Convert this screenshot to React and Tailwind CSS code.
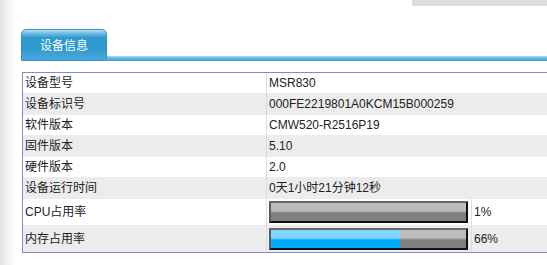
import React from 'react';

const rows = [
  { label: '设备型号', value: 'MSR830', h: 'h-[20px]', bg: 'bg-white' },
  { label: '设备标识号', value: '000FE2219801A0KCM15B000259', h: 'h-[22px]', bg: 'bg-[#ececec]' },
  { label: '软件版本', value: 'CMW520-R2516P19', h: 'h-[20px]', bg: 'bg-white' },
  { label: '固件版本', value: '5.10', h: 'h-[22px]', bg: 'bg-[#ececec]' },
  { label: '硬件版本', value: '2.0', h: 'h-[20px]', bg: 'bg-white' },
  { label: '设备运行时间', value: '0天1小时21分钟12秒', h: 'h-[22px]', bg: 'bg-[#ececec]' },
];

const usage = [
  { label: 'CPU占用率', pct: 1, fill: false, h: 'h-[26px]', bg: 'bg-white' },
  { label: '内存占用率', pct: 66, fill: true, h: 'h-[27px]', bg: 'bg-[#ececec]' },
];

const UsageBar = ({ pct, fill }) => (
  <div className="relative h-[22px] w-[199px] border-2 border-t-[#6a6a6a] border-l-[#5a5a5a] border-b-[#111] border-r-[#111] bg-[linear-gradient(#bdbdbd_0,#bdbdbd_8px,#9a9a9a_9px,#7f7f7f_10px,#7f7f7f_100%)]">
    {fill && (
      <div
        className="absolute left-0 top-0 h-full bg-[linear-gradient(#80d4ff_0,#80d4ff_8px,#40bfff_9px,#00aaff_10px,#00aaff_100%)]"
        style={{ width: `${pct}%` }}
      />
    )}
  </div>
);

const App = () => {
  return (
    <div className="flex h-[265px] w-[547px] overflow-hidden bg-white font-['Liberation_Sans','Noto_Sans_CJK_SC',sans-serif] text-[12px] text-[#222]">
      <div className="w-[15px] shrink-0 bg-[linear-gradient(to_right,#e4e4e4,#f4f4f4_60%,#ffffff)]" />

      <div className="flex min-w-0 flex-1 flex-col pl-[6px]">
        <div className="flex justify-end">
          <div className="h-[6px] w-[135px] bg-[#dcdcdc]" />
        </div>

        <div className="mt-[23px] flex items-end">
          <div className="flex h-[32px] w-[86px] shrink-0 items-center justify-center rounded-t-[5px] border border-[#3b8fc2] bg-[linear-gradient(#c2e4f6_0,#72c0e6_3px,#2f98cd_8px,#2f98cd_60%,#4aa9dc_100%)] pt-[2px] text-white">
            设备信息
          </div>
          <div className="h-[5px] flex-1 bg-[linear-gradient(#bfe3f5_0,#7cc5ea_1px,#55b2e0_3px,#3d9fd5_100%)]" />
        </div>

        <div className="ml-[1px] mt-[11px] w-[560px] border border-[#7d8cd0]">
          {rows.map((r) => (
            <div key={r.label} className={`flex ${r.h} ${r.bg}`}>
              <div className="flex w-[244px] shrink-0 items-center border-r border-[#dcdcdc] pl-[2px]">
                {r.label}
              </div>
              <div className="flex items-center pl-[2px]">{r.value}</div>
            </div>
          ))}
          {usage.map((u) => (
            <div key={u.label} className={`flex ${u.h} ${u.bg}`}>
              <div className="flex w-[244px] shrink-0 items-center border-r border-[#dcdcdc] pl-[2px]">
                {u.label}
              </div>
              <div className="flex w-[205px] shrink-0 items-center border-r border-[#dcdcdc] pl-[2px]">
                <UsageBar pct={u.pct} fill={u.fill} />
              </div>
              <div className="flex items-center pl-[2px]">{u.pct}%</div>
            </div>
          ))}
        </div>
      </div>
    </div>
  );
};

export default App;
